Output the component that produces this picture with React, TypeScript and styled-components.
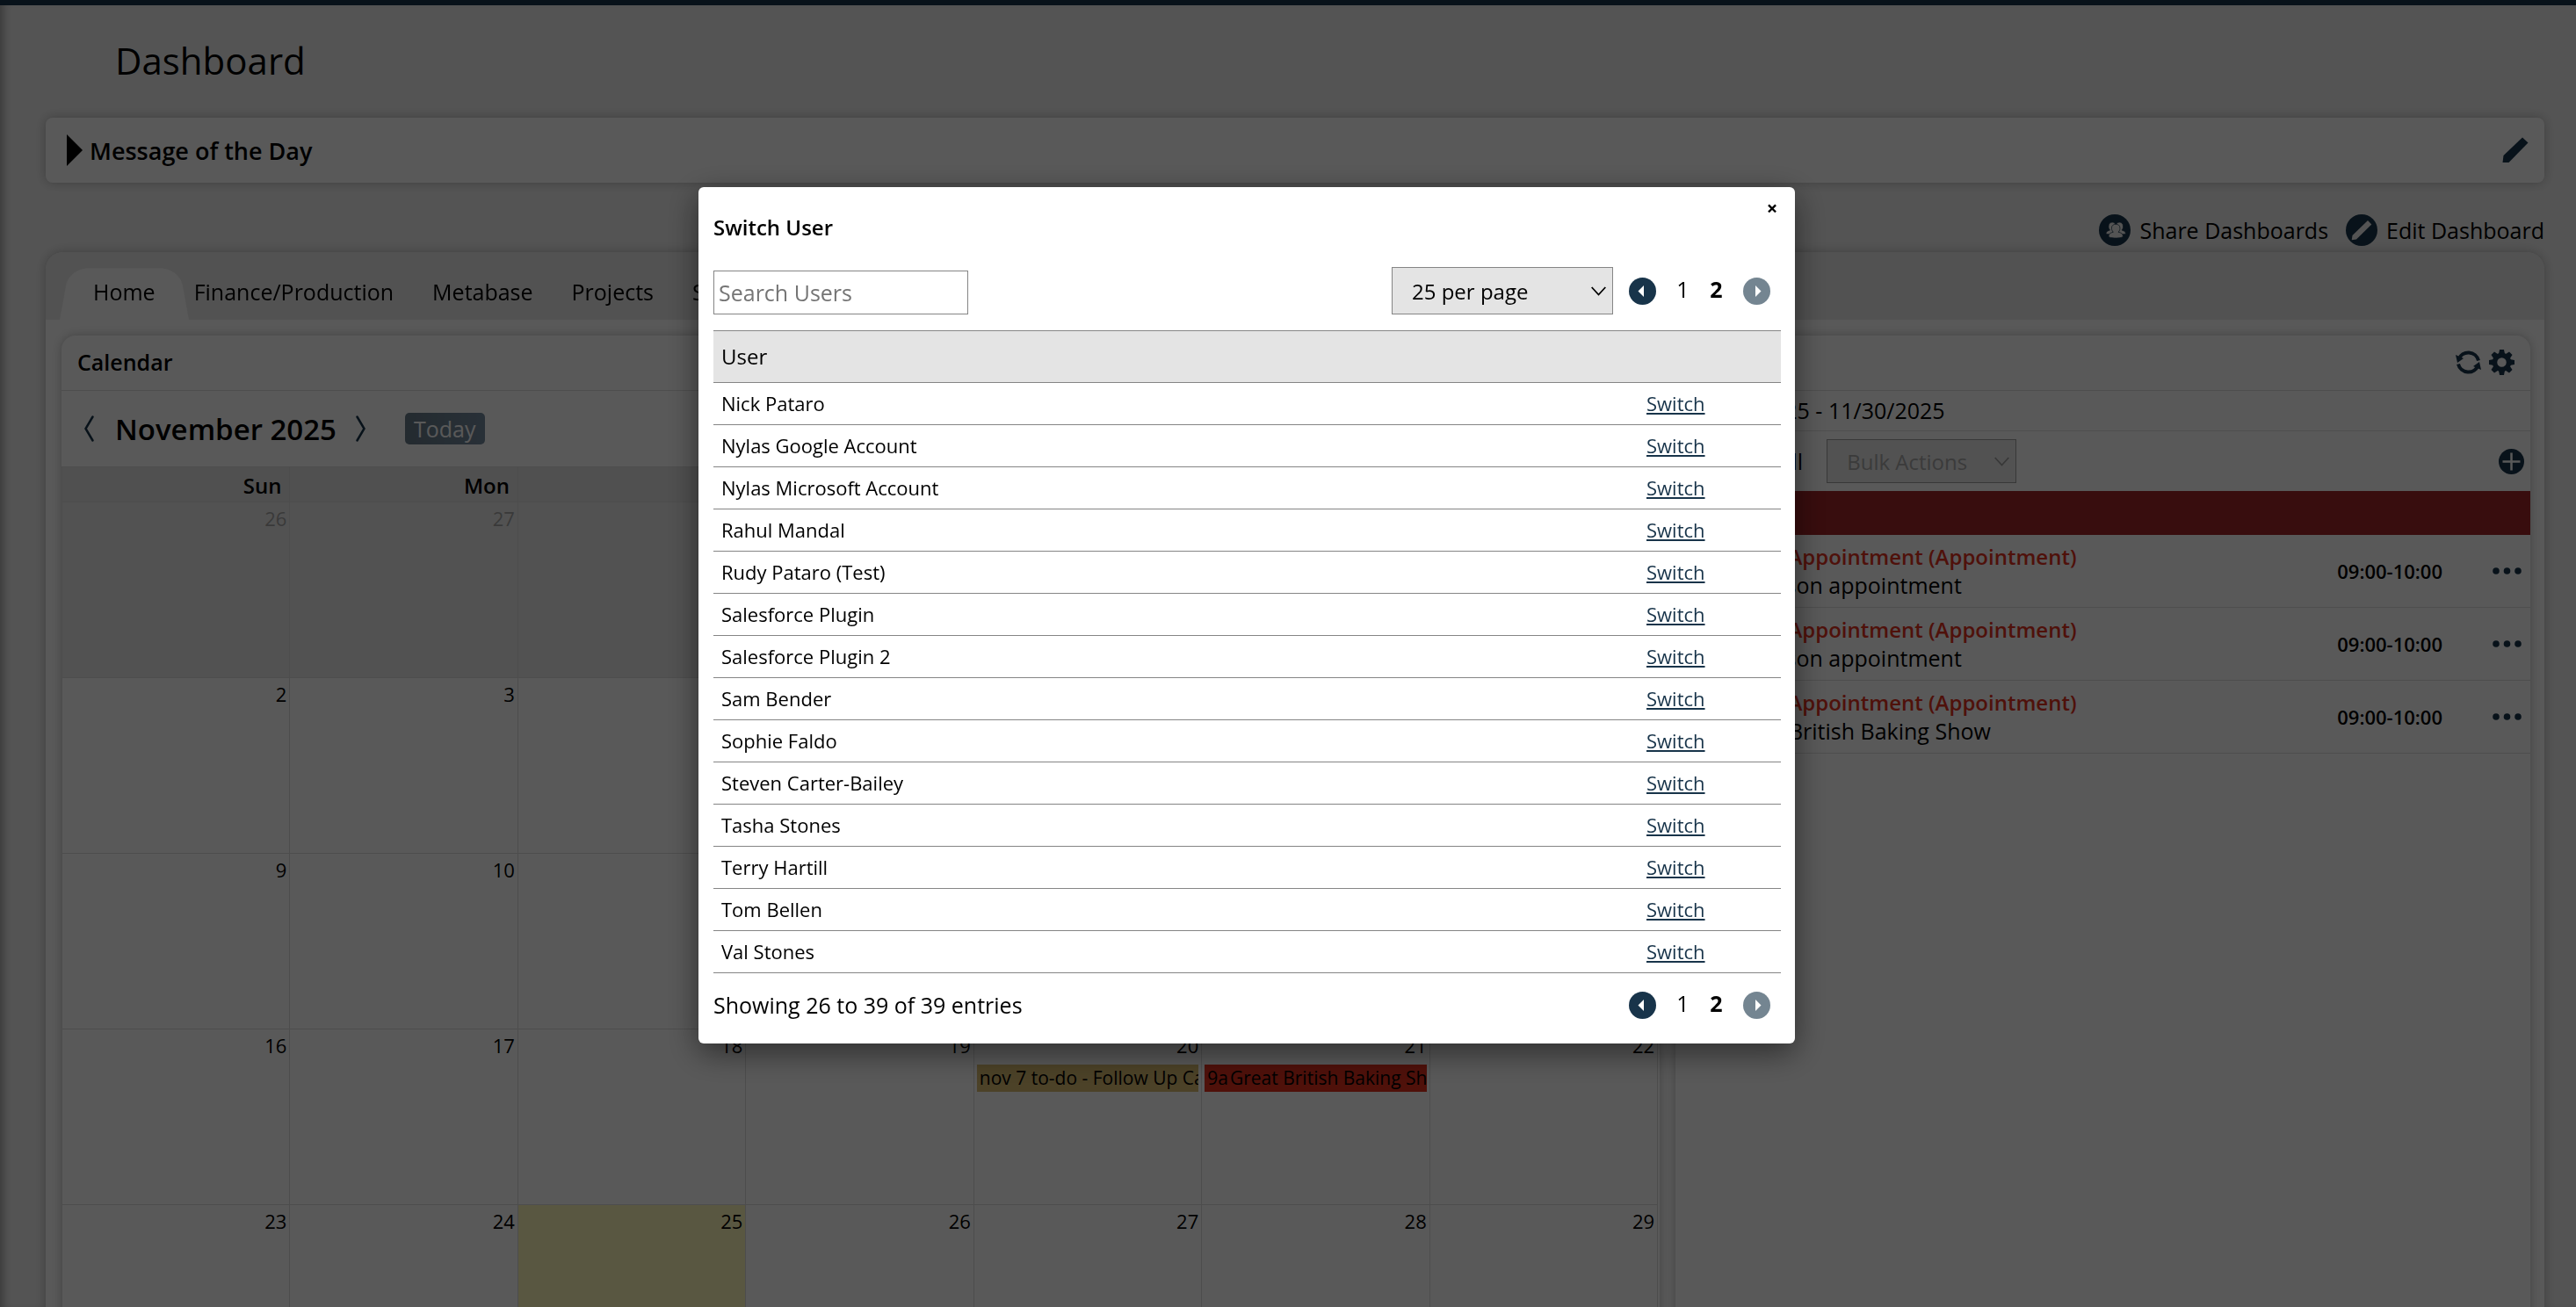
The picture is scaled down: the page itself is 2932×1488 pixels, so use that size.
import React from "react";
import styled, { createGlobalStyle, css } from "styled-components";

const NAVY = "#18344a";

const GlobalStyle = createGlobalStyle`
  *, *::before, *::after { box-sizing: border-box; }
  html, body { margin: 0; height: 100%; overflow: hidden; }
  body, button, input, select, table {
    font-family: "Open Sans", "Noto Sans", sans-serif;
    font-size: 25px;
    color: #000;
  }
  button { padding: 0; border: 0; background: none; cursor: pointer; }
  a { color: inherit; text-decoration: none; }
  h1, h2, h3 { margin: 0; }
  svg { display: block; }
`;

const Page = styled.div`
  height: 100vh;
  overflow: hidden;
  background: #f0f0f0;
  border-top: 6px solid ${NAVY};
  box-shadow: inset 10px 0 10px -6px rgba(0, 0, 0, 0.3);
`;

const Content = styled.div`
  padding: 0 36px 0 52px;
`;

const PageHeader = styled.header`
  display: flex;
  align-items: center;
  height: 128px;
  padding: 0 0 4px 79px;
`;

const PageTitle = styled.h1`
  font-size: 42px;
  font-weight: 400;
`;

const surface = css`
  background: #fff;
  box-shadow: 0 0 12px rgba(0, 0, 0, 0.25);
`;

const MessageCard = styled.section`
  ${surface}
  display: flex;
  align-items: center;
  height: 74px;
  padding: 0 18px 0 24px;
  border-radius: 8px;
`;

const MessageToggle = styled.button`
  display: flex;
  align-items: center;
  gap: 8px;
  margin-right: auto;
  font-size: 27px;
  font-weight: 600;
`;

const ActionBar = styled.div`
  display: flex;
  justify-content: flex-end;
  gap: 20px;
  margin: 36px 0 7px;
`;

const Action = styled.button`
  display: flex;
  align-items: center;
  gap: 10px;
  height: 36px;
`;

const Panel = styled.main`
  ${surface}
  border-radius: 20px 20px 0 0;
`;

const TabStrip = styled.nav`
  display: flex;
  align-items: flex-end;
  height: 77px;
  padding-left: 16px;
  border-radius: 20px 20px 0 0;
  background: #eaeaea;
`;

const Tab = styled.a<{ $active?: boolean }>`
  position: relative;
  z-index: 0;
  display: flex;
  align-items: center;
  height: 59px;
  padding: 0 22px 6px;
  ${(p) =>
    p.$active &&
    css`
      padding: 0 38px 6px;
      margin-right: -16px;
      &::before {
        content: "";
        position: absolute;
        z-index: -1;
        inset: auto 0 0;
        height: 71px;
        border-radius: 26px 26px 0 0;
        background: #fff;
        transform: perspective(100px) rotateX(14deg);
        transform-origin: bottom;
      }
    `}
`;

const Widgets = styled.div`
  display: grid;
  grid-template-columns: minmax(0, 187fr) minmax(0, 100fr);
  gap: 18px;
  padding: 18px 16px 0 18px;
`;

const Widget = styled.section`
  ${surface}
  height: 1300px;
  border-radius: 16px 16px 0 0;
`;

const WidgetHeader = styled.header`
  display: flex;
  align-items: center;
  justify-content: space-between;
  height: 63px;
  padding: 0 18px 2px;
  border-bottom: 1px solid #e0e0e0;
`;

const WidgetTitle = styled.h2`
  font-size: 25px;
  font-weight: 600;
`;

const IconRow = styled.div`
  display: flex;
  gap: 9px;
`;

const MonthBar = styled.div`
  display: flex;
  align-items: center;
  height: 86px;
  padding-left: 26px;
`;

const MonthTitle = styled.h3`
  margin: 0 22px 0 24px;
  font-size: 33px;
  font-weight: 600;
`;

const TodayButton = styled.button`
  height: 36px;
  margin-left: 45px;
  padding: 0 10px;
  border-radius: 5px;
  background: linear-gradient(90deg, #18344a, #2a4d6c);
  color: #fff;
  line-height: 36px;
  opacity: 0.65;
`;

const MonthTable = styled.table`
  width: calc(100% - 2px);
  table-layout: fixed;
  border-collapse: collapse;
`;

const WeekdayCell = styled.th`
  height: 40px;
  padding: 2px 9px 0;
  border: 1px solid #ddd;
  background: #e4e4e4;
  font-size: 24px;
  font-weight: 600;
  line-height: 36px;
  text-align: right;
`;

const DayCell = styled.td<{ $muted?: boolean; $today?: boolean }>`
  height: 200px;
  padding: 2px 3px;
  border: 1px solid #ddd;
  background: ${(p) => (p.$today ? "#fffabb" : p.$muted ? "#ebebeb" : "#fff")};
  vertical-align: top;
`;

const DayNumber = styled.div<{ $muted?: boolean }>`
  font-size: 22px;
  line-height: 32px;
  text-align: right;
  opacity: ${(p) => (p.$muted ? 0.3 : 1)};
`;

const CalendarEvent = styled.a<{ $color: string }>`
  display: flex;
  gap: 2px;
  height: 31px;
  margin-top: 6px;
  padding: 0 0 0 3px;
  overflow: hidden;
  background: ${(p) => p.$color};
  font-size: 21px;
  line-height: 30px;
  white-space: nowrap;
`;

const DateRange = styled.div`
  height: 46px;
  padding-left: 20px;
  border-bottom: 1px solid #e0e0e0;
  line-height: 44px;
`;

const BulkBar = styled.div`
  display: flex;
  align-items: center;
  height: 68px;
  padding: 0 7px 0 14px;
`;

const SelectAll = styled.label`
  display: flex;
  align-items: center;
  gap: 7px;
  width: 158px;
  white-space: nowrap;
`;

const CheckBox = styled.input`
  width: 20px;
  height: 20px;
  margin: 0;
`;

const SelectShell = styled.div`
  display: grid;
  align-items: center;
  & > * { grid-area: 1 / 1; }
  & > svg { justify-self: end; margin-right: 8px; pointer-events: none; }
`;

const Select = styled.select<{ $size: "small" | "large" }>`
  appearance: none;
  width: ${(p) => (p.$size === "small" ? 216 : 252)}px;
  height: ${(p) => (p.$size === "small" ? 50 : 54)}px;
  padding: 0 22px;
  border: 1px solid #858585;
  border-radius: 0;
  background: #e4e4e4;
  font-size: 24px;
  &:disabled { border-color: #a0a0a0; background: #ececec; color: #a8a8a8; opacity: 1; }
`;

const AddButton = styled.button`
  margin-left: auto;
`;

const OverdueBar = styled.div`
  height: 50px;
  background: #a02528;
`;

const TaskList = styled.ul`
  margin: 0;
  padding: 0;
  list-style: none;
`;

const Task = styled.li`
  display: flex;
  align-items: center;
  height: 83px;
  padding: 0 10px 0 14px;
  border-bottom: 1px solid #e0e0e0;
`;

const TaskText = styled.div`
  flex: 1;
  margin-left: 23px;
  line-height: 32px;
  white-space: nowrap;
`;

const TaskTitle = styled.a`
  display: block;
  color: #e2311f;
  font-size: 24px;
  font-weight: 600;
`;

const TaskTime = styled.span`
  margin-right: 57px;
  font-size: 22px;
  font-weight: 600;
`;

const Overlay = styled.div`
  position: fixed;
  inset: 0;
  z-index: 10;
  display: flex;
  align-items: flex-start;
  justify-content: center;
  padding: 213px 94px 0 0;
  background: rgba(0, 0, 0, 0.65);
`;

const Dialog = styled.section`
  position: relative;
  width: 1248px;
  padding: 28px 16px 26px 17px;
  border-radius: 6px;
  background: #fff;
  box-shadow: 0 10px 36px rgba(0, 0, 0, 0.5);
`;

const DialogTitle = styled.h2`
  font-size: 24px;
  font-weight: 600;
  line-height: 36px;
`;

const CloseButton = styled.button`
  position: absolute;
  top: 11px;
  right: 17px;
  width: 18px;
  height: 24px;
  font-size: 22px;
  font-weight: 700;
  line-height: 24px;
`;

const Toolbar = styled.div`
  display: flex;
  align-items: flex-end;
  justify-content: space-between;
  margin: 27px 0 18px;
`;

const ToolGroup = styled.div`
  display: flex;
  align-items: center;
  gap: 18px;
`;

const SearchBox = styled.input`
  width: 290px;
  height: 50px;
  padding: 0 5px;
  border: 1px solid #858585;
  &::placeholder { color: #757575; opacity: 1; }
`;

const Pager = styled.nav`
  display: flex;
  align-items: center;
  gap: 23px;
  padding-right: 12px;
`;

const PageLink = styled.a<{ $current?: boolean }>`
  width: 15px;
  padding-bottom: 4px;
  font-weight: ${(p) => (p.$current ? 700 : 400)};
  line-height: 32px;
  text-align: center;
`;

const UserTable = styled.table`
  width: 100%;
  border-collapse: separate;
  border-spacing: 0;
  table-layout: fixed;
`;

const UserHeading = styled.th`
  height: 60px;
  padding: 0 9px 2px;
  border: solid #858585;
  border-width: 1px 0;
  background: #e4e4e4;
  font-size: 24px;
  font-weight: 400;
  text-align: left;
  &:last-child { width: 162px; }
`;

const UserCell = styled.td`
  height: 48px;
  padding: 0 9px 2px;
  border-bottom: 1px solid #858585;
  font-size: 22px;
`;

const SwitchLink = styled.a`
  color: ${NAVY};
  text-decoration: underline;
`;

const DialogFooter = styled.footer`
  display: flex;
  align-items: center;
  justify-content: space-between;
  margin-top: 18px;
`;

const Pencil = ({ size, color = NAVY }: { size: number; color?: string }) => (
  <svg width={size} height={size} viewBox="0 0 30 30" fill={color} aria-hidden>
    <path d="M23 0.500 L29.500 6.500 L7.500 29 H0.500 L1.500 21 Z" />
  </svg>
);

const PeopleBadge = () => (
  <svg width="36" height="36" viewBox="0 0 36 36" aria-hidden>
    <circle cx="18" cy="18" r="18" fill={NAVY} />
    <g fill="#f0f0f0" stroke={NAVY} strokeWidth="0.700">
      <path d="M8 22.500c0-2.500 1.500-3.700 4.500-4.500c-1.300-1.500-1.700-3-1.500-5c.2-2.600 2-4 4.200-4s3.800 1.500 4 4c0 3-.5 4.500-2 6l-3 4z" />
      <path d="M30.500 22.500c0-2.500-1.500-3.700-4.500-4.500c1.300-1.500 1.700-3 1.500-5c-.2-2.600-2-4-4.200-4s-3.800 1.500-4 4c0 3 .5 4.500 2 6l3 4z" />
      <path d="M11 25c0-2.800 2-4 5.300-4.800c-1.600-1.500-2-3.200-1.800-5.200c.2-2.600 2.200-3.700 4.700-3.700s4.500 1.100 4.700 3.700c.2 2-.2 3.700-1.800 5.200c3.300.8 5.300 2 5.300 4.800c0 1.200-3.500 2-8.200 2s-8.200-.8-8.200-2z" />
    </g>
  </svg>
);

const PencilBadge = () => (
  <svg width="36" height="36" viewBox="0 0 36 36" aria-hidden>
    <circle cx="18" cy="18" r="18" fill={NAVY} />
    <path fill="#f0f0f0" d="M25 7 L29.300 11.500 L12 28.500 L6.700 29.300 L7.500 24 Z" />
  </svg>
);

const RefreshIcon = () => (
  <svg width="29" height="29" viewBox="0 0 29 29" aria-hidden>
    <g fill="none" stroke={NAVY} strokeWidth="4">
      <path d="M3.500 11 A11.800 11.800 0 0 1 26 12.500" />
      <path d="M25.500 18 A11.800 11.800 0 0 1 3 16.500" />
    </g>
    <path fill={NAVY} d="M0 6 L2 15 L9 10 Z M29 23 L27 14 L20 19 Z" />
  </svg>
);

const GearIcon = () => (
  <svg width="29" height="29" viewBox="-14.500 -14.500 29 29" aria-hidden>
    <circle r="8" fill="none" stroke={NAVY} strokeWidth="5.500" />
    {[0, 45, 90, 135, 180, 225, 270, 315].map((a) => (
      <path key={a} fill={NAVY} transform={`rotate(${a})`} d="M-3.600 -9 L-2.500 -14.500 H2.500 L3.600 -9 Z" />
    ))}
  </svg>
);

const PlusBadge = () => (
  <svg width="29" height="29" viewBox="0 0 29 29" aria-hidden>
    <circle cx="14.500" cy="14.500" r="14.500" fill={NAVY} />
    <path d="M14.500 4.500V24.500M4.500 14.500H24.500" stroke="#fff" strokeWidth="2.500" />
  </svg>
);

const Dots = () => (
  <svg width="33" height="8" viewBox="0 0 33 8" fill={NAVY} aria-hidden>
    <circle cx="4" cy="4" r="3.800" />
    <circle cx="16.500" cy="4" r="3.800" />
    <circle cx="29" cy="4" r="3.800" />
  </svg>
);

const Caret = ({ color = "#000" }: { color?: string }) => (
  <svg width="17" height="11" viewBox="0 0 17 11" fill="none" stroke={color} strokeWidth="1.800" aria-hidden>
    <path d="M0.700 1 L8.500 9.500 L16.300 1" />
  </svg>
);

const Chevron = ({ flip }: { flip?: boolean }) => (
  <svg width="11" height="30" viewBox="0 0 11 30" fill="none" stroke={NAVY} strokeWidth="2.500" strokeLinecap="round" aria-hidden>
    <path d={flip ? "M1.500 1.500 L9.500 15 L1.500 28.500" : "M9.500 1.500 L1.500 15 L9.500 28.500"} />
  </svg>
);

const ArrowBadge = ({ next }: { next?: boolean }) => (
  <svg width="31" height="31" viewBox="0 0 31 31" aria-hidden>
    <circle cx="15.500" cy="15.500" r="15.500" fill={next ? "#748591" : NAVY} />
    <path fill="#fff" d={next ? "M14 9 L20.500 15.500 L14 22 Z" : "M17 9 L10.500 15.500 L17 22 Z"} />
  </svg>
);

const users = [
  "Nick Pataro", "Nylas Google Account", "Nylas Microsoft Account", "Rahul Mandal",
  "Rudy Pataro (Test)", "Salesforce Plugin", "Salesforce Plugin 2", "Sam Bender",
  "Sophie Faldo", "Steven Carter-Bailey", "Tasha Stones", "Terry Hartill", "Tom Bellen", "Val Stones",
];

const tabs = ["Home", "Finance/Production", "Metabase", "Projects", "Sales"];
const weekdays = ["Sun", "Mon", "Tue", "Wed", "Thu", "Fri", "Sat"];
const weeks = [
  [26, 27, 28, 29, 30, 31, 1],
  [2, 3, 4, 5, 6, 7, 8],
  [9, 10, 11, 12, 13, 14, 15],
  [16, 17, 18, 19, 20, 21, 22],
  [23, 24, 25, 26, 27, 28, 29],
];

const events: Record<number, { time?: string; label: string; color: string }> = {
  20: { label: "nov 7 to-do - Follow Up Call", color: "#d9bd72" },
  21: { time: "9a", label: "Great British Baking Show", color: "#e2311f" },
};

const tasks = ["In person appointment", "In person appointment", "Great British Baking Show"];

const Pagination = ({ label }: { label: string }) => (
  <Pager aria-label={label}>
    <button aria-label="Previous page"><ArrowBadge /></button>
    <PageLink href="#page-1">1</PageLink>
    <PageLink href="#page-2" $current aria-current="page">2</PageLink>
    <button disabled aria-label="Next page"><ArrowBadge next /></button>
  </Pager>
);

const CalendarWidget = () => (
  <Widget>
    <WidgetHeader><WidgetTitle>Calendar</WidgetTitle></WidgetHeader>
    <MonthBar>
      <button aria-label="Previous month"><Chevron /></button>
      <MonthTitle>November 2025</MonthTitle>
      <button aria-label="Next month"><Chevron flip /></button>
      <TodayButton disabled>Today</TodayButton>
    </MonthBar>
    <MonthTable>
      <thead>
        <tr>{weekdays.map((d) => <WeekdayCell key={d}>{d}</WeekdayCell>)}</tr>
      </thead>
      <tbody>
        {weeks.map((week, w) => (
          <tr key={w}>
            {week.map((day) => {
              const muted = w === 0 && day > 7;
              const event = w > 0 ? events[day] : undefined;
              return (
                <DayCell key={day} $muted={muted} $today={w === 4 && day === 25}>
                  <DayNumber $muted={muted}>{day}</DayNumber>
                  {event && (
                    <CalendarEvent href="#event" $color={event.color}>
                      {event.time && <span>{event.time}</span>}
                      <span>{event.label}</span>
                    </CalendarEvent>
                  )}
                </DayCell>
              );
            })}
          </tr>
        ))}
      </tbody>
    </MonthTable>
  </Widget>
);

const TasksWidget = () => (
  <Widget>
    <WidgetHeader>
      <WidgetTitle>Tasks</WidgetTitle>
      <IconRow>
        <button aria-label="Refresh"><RefreshIcon /></button>
        <button aria-label="Settings"><GearIcon /></button>
      </IconRow>
    </WidgetHeader>
    <DateRange>11/01/2025 - 11/30/2025</DateRange>
    <BulkBar>
      <SelectAll><CheckBox type="checkbox" />Select All</SelectAll>
      <SelectShell>
        <Select $size="small" disabled aria-label="Bulk actions"><option>Bulk Actions</option></Select>
        <Caret color="#a0a0a0" />
      </SelectShell>
      <AddButton aria-label="Add task"><PlusBadge /></AddButton>
    </BulkBar>
    <OverdueBar />
    <TaskList>
      {tasks.map((task, i) => (
        <Task key={i}>
          <CheckBox type="checkbox" aria-label={task} />
          <TaskText>
            <TaskTitle href="#task">Video Appointment (Appointment)</TaskTitle>
            {task}
          </TaskText>
          <TaskTime>09:00-10:00</TaskTime>
          <button aria-label="More actions"><Dots /></button>
        </Task>
      ))}
    </TaskList>
  </Widget>
);

const SwitchUserDialog = () => (
  <Overlay>
    <Dialog role="dialog" aria-modal="true" aria-labelledby="switch-user-title">
      <CloseButton aria-label="Close">×</CloseButton>
      <DialogTitle id="switch-user-title">Switch User</DialogTitle>
      <Toolbar>
        <SearchBox type="search" placeholder="Search Users" aria-label="Search Users" />
        <ToolGroup>
          <SelectShell>
            <Select $size="large" aria-label="Rows per page"><option>25 per page</option></Select>
            <Caret />
          </SelectShell>
          <Pagination label="Pages, top" />
        </ToolGroup>
      </Toolbar>
      <UserTable>
        <thead>
          <tr><UserHeading>User</UserHeading><UserHeading aria-label="Action" /></tr>
        </thead>
        <tbody>
          {users.map((user) => (
            <tr key={user}>
              <UserCell>{user}</UserCell>
              <UserCell><SwitchLink href="#switch">Switch</SwitchLink></UserCell>
            </tr>
          ))}
        </tbody>
      </UserTable>
      <DialogFooter>
        <span>Showing 26 to 39 of 39 entries</span>
        <Pagination label="Pages, bottom" />
      </DialogFooter>
    </Dialog>
  </Overlay>
);

export default function App() {
  return (
    <>
      <GlobalStyle />
      <Page>
        <Content>
          <PageHeader><PageTitle>Dashboard</PageTitle></PageHeader>
          <MessageCard>
            <MessageToggle aria-expanded={false}>
              <svg width="18" height="36" viewBox="0 0 18 36" aria-hidden><path d="M0 0 L18 18 L0 36 Z" /></svg>
              Message of the Day
            </MessageToggle>
            <button aria-label="Edit message"><Pencil size={30} /></button>
          </MessageCard>
          <ActionBar>
            <Action><PeopleBadge />Share Dashboards</Action>
            <Action><PencilBadge />Edit Dashboard</Action>
          </ActionBar>
          <Panel>
            <TabStrip>
              {tabs.map((tab, i) => <Tab key={tab} href="#tab" $active={i === 0}>{tab}</Tab>)}
            </TabStrip>
            <Widgets>
              <CalendarWidget />
              <TasksWidget />
            </Widgets>
          </Panel>
        </Content>
      </Page>
      <SwitchUserDialog />
    </>
  );
}
